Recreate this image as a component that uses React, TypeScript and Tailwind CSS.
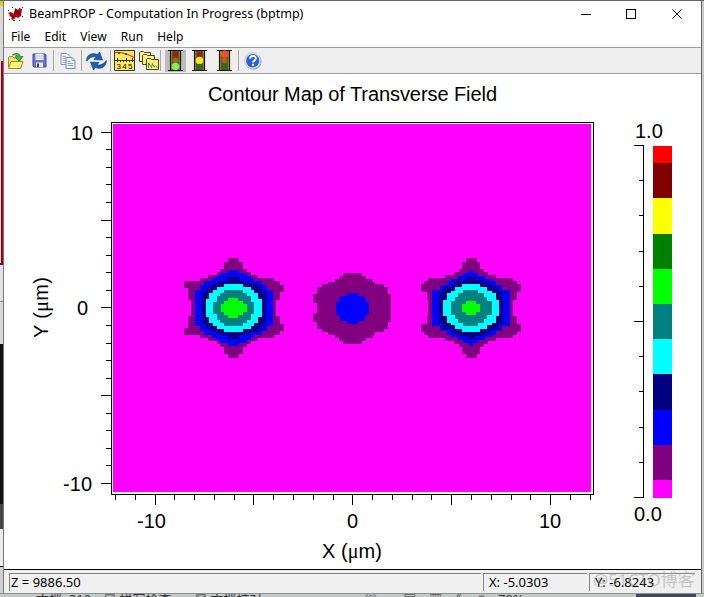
import type { ReactNode } from 'react'

// [top, left, right], each row runs down to the next one and is mirrored below the centre line
type Row = [number, number, number]

type Contour = { color: string; rows: Row[] }

type Spot = { x: number; y: number; center: number; contours: Contour[] }

const MENU = ['File', 'Edit', 'View', 'Run', 'Help']

const SPOTS: Spot[] = [
  {
    x: 170,
    y: 250,
    center: 174,
    contours: [
      { color: '#800080', rows: [[24, 173, 207], [35, 163, 218], [56, 150, 230], [66, 140, 242], [75, 115, 265], [84, 90, 313], [94, 42, 330], [105, 42, 342], [115, 54, 342], [127, 54, 330], [150, 63, 318]] },
      { color: '#0000ff', rows: [[59, 173, 207], [70, 150, 230], [77, 138, 242], [84, 125, 253], [94, 102, 277], [105, 90, 290], [120, 75, 309]] },
      { color: '#000080', rows: [[82, 173, 207], [92, 150, 230], [97, 138, 242], [103, 125, 265], [112, 108, 277], [125, 95, 288]] },
      { color: '#00ffff', rows: [[101, 163, 218], [110, 140, 242], [120, 128, 253], [130, 118, 265], [147, 107, 277]] },
      { color: '#008080', rows: [[120, 163, 218], [130, 150, 230], [138, 140, 242], [155, 130, 253]] },
      { color: '#00ff00', rows: [[143, 175, 205], [153, 163, 218], [163, 152, 232]] },
    ],
  },
  {
    x: 305,
    y: 265,
    center: 130,
    contours: [
      { color: '#800080', rows: [[24, 115, 172], [33, 103, 182], [42, 91, 205], [50, 70, 210], [58, 50, 238], [67, 35, 250], [88, 25, 257], [115, 35, 257]] },
      { color: '#0000ff', rows: [[83, 125, 158], [92, 105, 180], [103, 103, 182], [110, 93, 191]] },
    ],
  },
  {
    x: 410,
    y: 250,
    center: 174,
    contours: [
      { color: '#800080', rows: [[24, 167, 200], [35, 157, 210], [56, 147, 222], [66, 133, 233], [75, 105, 257], [84, 55, 310], [94, 43, 320], [103, 34, 332], [127, 50, 320], [150, 55, 310]] },
      { color: '#0000ff', rows: [[60, 178, 188], [68, 160, 205], [77, 145, 225], [87, 122, 245], [94, 110, 257], [105, 90, 277], [120, 66, 300]] },
      { color: '#000080', rows: [[80, 170, 195], [90, 145, 222], [97, 133, 235], [103, 122, 245], [112, 100, 268], [125, 88, 280]] },
      { color: '#00ffff', rows: [[101, 157, 210], [112, 135, 232], [122, 122, 245], [130, 112, 257], [150, 100, 267]] },
      { color: '#008080', rows: [[120, 160, 205], [130, 145, 222], [140, 135, 232], [153, 122, 245]] },
      { color: '#00ff00', rows: [[152, 167, 197], [163, 155, 210]] },
    ],
  },
]

const SCALE = [
  { color: '#ff0000', from: 146, to: 163 },
  { color: '#800000', from: 163, to: 198 },
  { color: '#ffff00', from: 198, to: 234 },
  { color: '#008000', from: 234, to: 269 },
  { color: '#00ff00', from: 269, to: 304 },
  { color: '#008080', from: 304, to: 339 },
  { color: '#00ffff', from: 339, to: 374 },
  { color: '#000080', from: 374, to: 410 },
  { color: '#0000ff', from: 410, to: 445 },
  { color: '#800080', from: 445, to: 480 },
  { color: '#ff00ff', from: 480, to: 498 },
]

const X_TICKS = Array.from({ length: 25 }, (_, i) => i - 12)
const Y_TICKS = Array.from({ length: 21 }, (_, i) => i - 10)
const SCALE_TICKS = Array.from({ length: 11 }, (_, i) => i)

function contourPath(rows: Row[], center: number) {
  return rows
    .map(([top, left, right], i) => {
      const bottom = i + 1 < rows.length ? rows[i + 1][0] : center
      const w = right - left
      const h = bottom - top
      return `M${left} ${top}h${w}v${h}h${-w}zM${left} ${2 * center - bottom}h${w}v${h}h${-w}z`
    })
    .join('')
}

function Plot() {
  return (
    <svg className="block h-[495px] w-[697px]" viewBox="4 74 697 495" shapeRendering="crispEdges">
      <rect x="111.5" y="122.5" width="482" height="372" fill="#fff" stroke="#000" />
      <rect x="113" y="124" width="478" height="368" fill="#ff00ff" />
      {SPOTS.map((s) => (
        <g key={s.x} transform={`translate(${s.x} ${s.y}) scale(${1 / 3})`}>
          {s.contours.map((c) => (
            <path key={c.color} d={contourPath(c.rows, s.center)} fill={c.color} />
          ))}
        </g>
      ))}
      <g fill="#000">
        {X_TICKS.map((t) => (
          <rect key={t} x={Math.round(352.3 + t * 19.78)} y="495" width="1" height={t % 5 === 0 ? 10 : 5} />
        ))}
        {Y_TICKS.map((t) => {
          const len = t % 5 === 0 ? 10 : 5
          return <rect key={t} x={111 - len} y={Math.round(307.4 - t * 17.56)} width={len} height="1" />
        })}
        <rect x="643" y="145" width="1" height="353" />
        {SCALE_TICKS.map((t) => {
          const len = t % 5 === 0 ? 9 : 4
          return <rect key={t} x={643 - len} y={Math.round(145 + t * 35.2)} width={len} height="1" />
        })}
      </g>
      {SCALE.map((s) => (
        <rect key={s.from} x="653" y={s.from} width="19" height={s.to - s.from} fill={s.color} />
      ))}
      <g className="font-['Liberation_Sans',Arial,sans-serif] text-[20px]" fill="#000">
        <text x="208" y="101" textLength="289">Contour Map of Transverse Field</text>
        <text x="93" y="140" textAnchor="end">10</text>
        <text x="88" y="315" textAnchor="end">0</text>
        <text x="92" y="491" textAnchor="end">-10</text>
        <text x="151.5" y="528" textAnchor="middle">-10</text>
        <text x="352.5" y="528" textAnchor="middle">0</text>
        <text x="550" y="528" textAnchor="middle">10</text>
        <text x="635" y="138">1.0</text>
        <text x="634" y="521">0.0</text>
        <text x="322" y="558" textLength="60">
          X (<tspan className="font-['Liberation_Serif',serif]">μ</tspan>m)
        </text>
        <text transform="translate(48 338) rotate(-90)" textLength="61">
          Y (<tspan className="font-['Liberation_Serif',serif]">μ</tspan>m)
        </text>
      </g>
    </svg>
  )
}

function AppLogo() {
  return (
    <svg className="h-4 w-4" viewBox="0 0 16 16">
      <path d="M0 7l3-1 3 2 1-6 3 2 1-2 3 1-1 7-3 2-2-1-3 3-2-1 1-2-3-1 1-1z" fill="#b80010" />
      <path d="M8 3l3 3 2-1-2 4-3-2-3 3 1-3zM3 10l3-1-1 3z" fill="#6e0008" />
      <path d="M4 1h1v1H4zM14 1h1v1h-1zM0 4h1v1H0zM14 10h1v1h-1zM5 14h2v1H5zM1 13h1v1H1zM11 14h1v1h-1z" fill="#222" />
    </svg>
  )
}

function OpenIcon() {
  return (
    <svg className="h-[18px] w-[18px]" viewBox="0 0 18 18" strokeLinejoin="round">
      <path d="M1.500 15V5.500l1-1h3l1.500 1.500h6V9" fill="#f8e46c" stroke="#a78420" />
      <path d="M1.500 16.500L4 9.500h12l-2.500 7z" fill="#fff07a" stroke="#a78420" />
      <path d="M5.500 3C9 .2 13 1.500 13.400 4.500H16L12 9.200 8 4.700h2.600C10 3 8 2.500 5.500 3z" fill="#45bd35" stroke="#16811d" strokeWidth=".8" />
    </svg>
  )
}

function SaveIcon() {
  return (
    <svg className="h-[15px] w-[15px]" viewBox="0 0 15 15">
      <path d="M1 1h12l1 1v12H2l-1-1z" fill="#6a70ce" stroke="#4549a4" />
      <path d="M3.500 1h8v6h-8z" fill="#f7f8ff" />
      <path d="M4 3h7M4 5h7" stroke="#b9bce3" />
      <path d="M4 9.500h7V14H4z" fill="#e7e8f5" />
      <path d="M5 10.500h2V14H5z" fill="#373b8e" />
    </svg>
  )
}

function CopyIcon() {
  return (
    <svg className="h-4 w-4" viewBox="0 0 16 16">
      <path d="M1 .5h6l3 3v8H1z" fill="#f3f7ff" stroke="#8095c5" />
      <path d="M2.500 3.500H6M2.500 5.500h5M2.500 7.500h5M2.500 9.500h5" stroke="#98aad4" />
      <path d="M6 4.500h6l3 3v8H6z" fill="#f3f7ff" stroke="#7389bc" />
      <path d="M12 4.500v3h3M7.500 8.500h3M7.500 10.500h6M7.500 12.500h6" fill="none" stroke="#8ca0d0" />
    </svg>
  )
}

function RefreshIcon() {
  return (
    <svg className="h-[20px] w-[21px]" viewBox="0 0 21 20">
      <path d="M.7 10C0 5 5 .8 11.500 3.500L13.500 1l3 8-8.500-.5 2-2.300C6.500 5 3.500 6.500.7 10z" fill="#1c63b5" stroke="#0b3c7e" strokeWidth=".7" />
      <path d="M20.300 9.500c.5 5.500-5 9.500-11 7L7.500 19l-3-8 8.500.5-2 2.300c3.500 1 6.500-.8 9.300-4.300z" fill="#1c63b5" stroke="#0b3c7e" strokeWidth=".7" />
    </svg>
  )
}

function RulerIcon() {
  return (
    <svg className="h-[21px] w-[21px]" viewBox="0 0 21 21">
      <path d="M.5.5h20v20H.5z" fill="#ffe95c" stroke="#333" />
      <path d="M1 2.500c7-.5 12 1 19 5" fill="none" stroke="#e74416" strokeWidth="1.300" />
      <path d="M4 2h2v2H4zM11 3h2v2h-2z" fill="#275f83" />
      <path d="M1 10.500h19M3.500 8v4M6.500 10v2M9.500 10v2M12.500 8v4M15.500 10v2M18.500 8v4" stroke="#333" />
      <text x="2.500" y="19" className="font-['Liberation_Sans',sans-serif] text-[8px]" textLength="16">345</text>
    </svg>
  )
}

function GraphsIcon() {
  return (
    <svg className="h-[19px] w-[20px]" viewBox="0 0 20 19">
      <path d="M.5 10.500v-9l1-1h3l1 1h6v9z" fill="#fff28a" stroke="#4a4718" />
      <path d="M3.500 13.500v-9l1-1h3l1 1h7v9z" fill="#fff28a" stroke="#4a4718" />
      <path d="M7.500 18.500v-10l1-1h3l1 1h7v10z" fill="#fff16c" stroke="#4a4718" />
      <path d="M9.500 17v-5l2 3 1 1.500 1-4 1.500 3.500 1.500-1 2 1.500" fill="none" stroke="#17727c" strokeWidth=".8" />
    </svg>
  )
}

function TrafficLight({ lit }: { lit: 'red' | 'yellow' | 'green' }) {
  return (
    <svg className="h-[21px] w-[15px]" viewBox="0 0 15 21">
      <path d="M2 1h11v19H2z" fill="#5c5814" />
      <path d="M0 .5h15M0 20.500h15M2.500 0v21M12.500 0v21" stroke="#17150a" strokeWidth="1.200" />
      <path d="M3.500 1v19M11.500 1v19" stroke="#8b7b23" />
      <circle cx="7.500" cy="4.300" r={lit === 'red' ? 3.7 : 2.8} fill={lit === 'red' ? '#ff4930' : '#9c1d1d'} />
      <circle cx="7.500" cy="10.500" r={lit === 'yellow' ? 3.7 : 2.8} fill={lit === 'yellow' ? '#ffe52c' : '#9b6a1d'} />
      <circle cx="7.500" cy="16.500" r={lit === 'green' ? 3.7 : 2.8} fill={lit === 'green' ? '#7df154' : '#276e2c'} />
    </svg>
  )
}

function HelpIcon() {
  return (
    <svg className="h-[18px] w-[18px]" viewBox="0 0 18 18">
      <circle cx="9.300" cy="9.500" r="8.300" fill="#a8adba" />
      <circle cx="8.700" cy="8.700" r="8" fill="#f2f5ff" stroke="#9cadd9" strokeWidth=".7" />
      <circle cx="8.700" cy="8.700" r="6.700" fill="#2c61cf" />
      <path d="M6 6.700c0-3.500 5.800-3.500 5.800-.3 0 2-2.800 2-2.800 4" fill="none" stroke="#fff" strokeWidth="1.900" />
      <path d="M8 11.800h2v2H8z" fill="#fff" />
    </svg>
  )
}

function Tool({ children, className }: { children: ReactNode; className: string }) {
  return <div className={`flex h-full shrink-0 items-center justify-center ${className}`}>{children}</div>
}

function Separator() {
  return <div className="h-[21px] w-px shrink-0 bg-[#a8a8a8]" />
}

function StatusPanel({ children, className }: { children: ReactNode; className: string }) {
  return (
    <div className={`h-[18px] overflow-hidden border-t border-l border-[#868686] text-[13px] leading-[17px] whitespace-pre ${className}`}>
      {children}
    </div>
  )
}

export default function App() {
  return (
    <div className="relative flex h-[597px] w-[704px] flex-col overflow-hidden bg-[#bfc1c0] font-['Noto_Sans','Noto_Sans_CJK_SC',sans-serif] text-black">
      <div className="h-px shrink-0 bg-[#66616a]" />
      <div className="flex h-[592px] shrink-0">
        {/* Sliver of the window behind */}
        <div className="flex w-[4px] shrink-0 flex-col border-r border-[#777]">
          <div className="h-[5px] bg-[#d8c831]" />
          <div className="h-[55px] bg-[#dadada]" />
          <div className="h-[202px] border-l border-[#ddd] bg-[#a60010]" />
          <div className="h-[2px] bg-[#760060]" />
          <div className="h-[36px] bg-[#e2e2e2]" />
          <div className="h-[43px] border-t border-[#888] bg-[#d8d8d8]" />
          <div className="h-[160px] bg-[#111]" />
          <div className="h-[25px] bg-[#444]" />
          <div className="h-[37px] bg-[#eee]" />
          <div className="flex-1 border-t border-black bg-[#d0d0d0]" />
        </div>

        <div className="flex w-[697px] flex-col bg-white">
          {/* Title bar */}
          <div className="flex h-[26px] shrink-0 items-center pl-1">
            <AppLogo />
            <span className="ml-[5px] w-[504px] text-[12.5px] whitespace-nowrap">
              BeamPROP - Computation In Progress (bptmp)
            </span>
            <svg className="ml-12 h-[12px] w-[102px] shrink-0" viewBox="0 0 102 12" fill="none" stroke="#000">
              <path d="M0 6.500h10M45.500 1.500h9v9h-9z" shapeRendering="crispEdges" />
              <path d="M91.500 1.500l9 9M100.500 1.500l-9 9" />
            </svg>
          </div>

          {/* Menu */}
          <div className="flex h-[20px] shrink-0 items-center gap-[14px] pl-[7px] text-[12px] tracking-[0.06px]">
            {MENU.map((m) => (
              <span key={m}>{m}</span>
            ))}
          </div>

          {/* Toolbar */}
          <div className="flex h-[27px] shrink-0 items-center border-y border-[#9d9d9d] bg-[#eee]">
            <Tool className="w-6"><OpenIcon /></Tool>
            <Tool className="w-[25px] pr-[2px]"><SaveIcon /></Tool>
            <Separator />
            <Tool className="w-[27px]"><CopyIcon /></Tool>
            <Separator />
            <Tool className="w-[28px]"><RefreshIcon /></Tool>
            <Separator />
            <Tool className="w-[26px]"><RulerIcon /></Tool>
            <Tool className="w-[23px]"><GraphsIcon /></Tool>
            <Separator />
            <Tool className="ml-1 w-[21px]">
              <div className="flex h-[22px] w-[21px] items-center justify-center bg-[#bcbcbc]"><TrafficLight lit="green" /></div>
            </Tool>
            <Tool className="ml-[2px] w-[23px]"><TrafficLight lit="yellow" /></Tool>
            <Tool className="ml-[2px] w-[22px]"><TrafficLight lit="red" /></Tool>
            <div className="w-[3px]" />
            <Separator />
            <Tool className="w-[27px]"><HelpIcon /></Tool>
          </div>

          <Plot />

          {/* Status bar */}
          <div className="flex h-[24px] shrink-0 items-center gap-[2px] border-t border-black bg-[#f0f0f0] pl-[5px]">
            <StatusPanel className="w-[472px] pl-px">Z = 9886.50</StatusPanel>
            <StatusPanel className="w-[104px] pl-[5px]">X: -5.0303</StatusPanel>
            <StatusPanel className="w-[106px] pl-[5px]">Y: -6.8243</StatusPanel>
          </div>
        </div>

        <div className="w-[3px] border-l border-[#666] bg-[#c9c9c9]" />
      </div>

      {/* Taskbar edge showing below the window */}
      <div className="flex h-[4px] shrink-0 justify-between overflow-hidden border-t border-[#8c9090] bg-[#c3c9c7] px-2 text-[13px] leading-[11px] whitespace-nowrap text-[#333]">
        <span className="pl-7">文档: 210　☑ 拼写检查 ▾　☒ 文档校对</span>
        <span>◎　　▤　▥　《　 ▯　70% ▾</span>
        <span className="w-[60px] bg-[#414757]" />
      </div>

      <div className="absolute top-[568px] left-[593px] text-[17px] leading-[24px] whitespace-nowrap text-[#999]/50">@51CTO博客</div>
    </div>
  )
}
